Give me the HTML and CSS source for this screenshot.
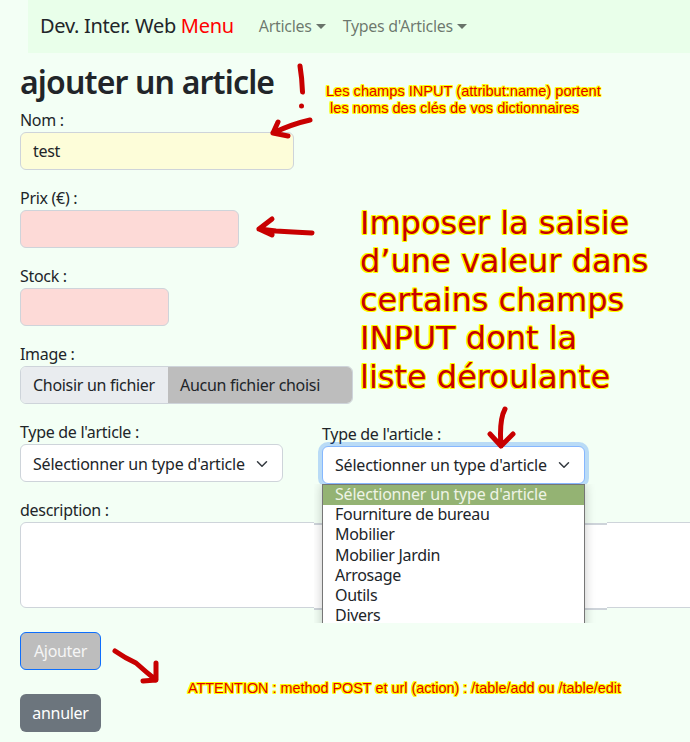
FILE: index.html
```html
<!DOCTYPE html>
<html lang="fr">
<head>
<meta charset="utf-8">
<title>ajouter un article</title>
<link rel="stylesheet" href="styles.css">
</head>
<body>
<div class="page">
  <nav class="navbar">
    <a class="brand">Dev. Inter. Web <span class="brand-red">Menu</span></a>
    <a class="nav-link">Articles<i class="caret"></i></a>
    <a class="nav-link">Types d'Articles<i class="caret"></i></a>
  </nav>
  <main class="content">
    <h1 class="title">ajouter un article</h1>
    <div class="field">
      <label class="lbl">Nom :</label>
      <input class="ctl ctl-name" type="text" value="test">
    </div>
    <div class="field">
      <label class="lbl">Prix (€) :</label>
      <input class="ctl ctl-price" type="text">
    </div>
    <div class="field">
      <label class="lbl">Stock :</label>
      <input class="ctl ctl-stock" type="text">
    </div>
    <div class="field">
      <label class="lbl">Image :</label>
      <div class="file"><span class="file-btn">Choisir un fichier</span><span class="file-name">Aucun fichier choisi</span></div>
    </div>
    <div class="type-row">
      <div class="type-col">
        <label class="lbl">Type de l'article :</label>
        <div class="sel">Sélectionner un type d'article<svg class="chev" viewBox="0 0 16 16"><path d="M2 5l6 6 6-6" fill="none" stroke="#343a40" stroke-width="2" stroke-linecap="round" stroke-linejoin="round"/></svg></div>
      </div>
      <div class="type-col type-col-open">
        <label class="lbl">Type de l'article :</label>
        <div class="sel sel-focus">Sélectionner un type d'article<svg class="chev" viewBox="0 0 16 16"><path d="M2 5l6 6 6-6" fill="none" stroke="#343a40" stroke-width="2" stroke-linecap="round" stroke-linejoin="round"/></svg></div>
        <div class="patch">
          <div class="patch-band"></div>
          <ul class="list">
            <li class="opt opt-active">Sélectionner un type d'article</li>
            <li class="opt">Fourniture de bureau</li>
            <li class="opt">Mobilier</li>
            <li class="opt">Mobilier Jardin</li>
            <li class="opt">Arrosage</li>
            <li class="opt">Outils</li>
            <li class="opt">Divers</li>
          </ul>
        </div>
      </div>
    </div>
    <div class="field field-desc">
      <label class="lbl">description :</label>
      <textarea class="ctl ctl-desc"></textarea>
    </div>
    <button class="btn btn-add" type="button">Ajouter</button>
    <button class="btn btn-cancel" type="button">annuler</button>
  </main>

  <svg class="ink" viewBox="0 0 690 742" width="690" height="742">
    <g fill="none" stroke="#c80000" stroke-linecap="round" stroke-linejoin="round">
      <path stroke-width="5" d="M300 66 Q302 78 302.500 92"/>
      <path stroke-width="5" d="M310 120 Q292 124 273 133 M278 122 L273 133 L288 136"/>
      <path stroke-width="5" d="M312 233 Q292 232 276 231 L259 229 M272 219 L259 229 L272 235"/>
      <path stroke-width="5" d="M505 409 Q499 420 501 446 M490 434 L501 446 L513 434"/>
      <path stroke-width="5" d="M115 651 Q125 658 136 663 Q146 672 156 680 M156 663 L156 680 L143 681"/>
    </g>
    <circle cx="301.500" cy="106" r="2.500" fill="#c80000"/>
  </svg>
  <p class="note note-top">Les champs INPUT (attribut:name) portent<br>&nbsp;les noms des clés de vos dictionnaires</p>
  <p class="note-big">Imposer la saisie<br>d’une valeur dans<br>certains champs<br>INPUT dont la<br>liste déroulante</p>
  <p class="note note-bottom">ATTENTION : method POST et url (action) : /table/add ou /table/edit</p>
</div>
</body>
</html>
```
FILE: styles.css
```css
* { box-sizing: border-box; }
html, body { margin: 0; padding: 0; }
body {
  background: #f3fff5;
  color: #212529;
  font-family: "Noto Sans", "Open Sans", sans-serif;
  font-size: 16px;
  letter-spacing: -0.3px;
}
.page {
  position: relative;
  width: 690px;
  height: 742px;
  overflow: hidden;
}
.navbar {
  display: flex;
  align-items: center;
  height: 53px;
  margin-left: 28px;
  padding: 0 0 2px 12px;
  background: #e9ffea;
}
.brand { font-size: 20px; margin-right: 25px; white-space: nowrap; }
.brand-red { color: #ff0000; }
.nav-link { color: rgba(0,0,0,.55); margin-right: 17px; white-space: nowrap; }
.caret {
  display: inline-block;
  margin-left: 4px;
  vertical-align: 3px;
  border-top: 5px solid rgba(0,0,0,.55);
  border-left: 5px solid transparent;
  border-right: 5px solid transparent;
}
.content { padding: 10px 20px 0; }
.title {
  margin: 0 0 7px;
  font-size: 32px;
  font-weight: 600;
  letter-spacing: -0.85px;
  line-height: 38px;
}
.field { margin-bottom: 16px; }
.field-desc { margin-bottom: 24px; }
.lbl { display: block; height: 24px; line-height: 24px; }
.ctl {
  display: block;
  height: 38px;
  padding: 6px 12px;
  border: 1px solid #ced4da;
  border-radius: 6px;
  font: inherit;
  letter-spacing: inherit;
  color: #212529;
  outline: none;
}
.ctl-name { width: 274px; background: #fdfdd9; }
.ctl-price { width: 219px; background: #fddad7; }
.ctl-stock { width: 149px; background: #fddad7; }
.ctl-desc { width: 690px; height: 86px; background: #fff; resize: none; }
.file {
  display: flex;
  width: 333px;
  height: 38px;
  border: 1px solid #ced4da;
  border-radius: 6px;
  overflow: hidden;
  line-height: 36px;
}
.file-btn { width: 147px; padding-left: 12px; background: #e9ecef; white-space: nowrap; }
.file-name { flex: 1; padding-left: 12px; background: #bdbdbd; white-space: nowrap; }
.type-row { display: flex; gap: 39px; margin-bottom: 14px; }
.type-col { width: 263px; }
.type-col-open { position: relative; margin-top: 2px; }
.sel {
  display: flex;
  align-items: center;
  justify-content: space-between;
  height: 38px;
  padding: 1px 12px 0;
  background: #fff;
  border: 1px solid #ced4da;
  border-radius: 6px;
  letter-spacing: -0.2px;
  white-space: nowrap;
}
.sel-focus {
  position: relative;
  z-index: 2;
  padding-top: 0;
  border-color: #86b7fe;
  box-shadow: 0 0 0 4px rgba(13,110,253,.25);
}
.chev { width: 12px; height: 12px; margin-right: 2px; flex: none; }
.patch {
  position: absolute;
  z-index: 3;
  top: 62px;
  left: -8px;
  width: 293px;
  height: 139px;
  overflow: hidden;
  background: #f3fff5;
}
.patch-band {
  position: absolute;
  top: 39px;
  left: 0;
  width: 293px;
  height: 87px;
  background: #fff;
  border-top: 2px solid #ced4da;
  border-bottom: 2px solid #ced4da;
}
.list {
  position: absolute;
  top: 0;
  left: 8px;
  width: 263px;
  height: 160px;
  margin: 0;
  padding: 0;
  list-style: none;
  background: #fff;
  border: 1px solid #767676;
  box-shadow: 0 0 10px rgba(0,0,0,.22);
}
.opt { height: 20.200px; padding-left: 12px; line-height: 18px; white-space: nowrap; }
.opt-active { background: #94b373; color: #eef3e6; letter-spacing: -0.2px; }
.btn {
  display: block;
  height: 38px;
  width: 81px;
  margin-bottom: 24px;
  padding: 0;
  border: 1px solid transparent;
  border-radius: 6px;
  font: inherit;
  letter-spacing: inherit;
}
.btn-add { background: #bdbdbd; border-color: #0d6efd; color: #f5f5f5; }
.btn-cancel { background: #6c757d; color: #fff; }
.ink { position: absolute; top: 0; left: 0; z-index: 4; pointer-events: none; }
.note, .note-big {
  position: absolute;
  z-index: 5;
  margin: 0;
  white-space: nowrap;
  letter-spacing: 0;
}
.note {
  font-family: "Liberation Sans", sans-serif;
  font-size: 14.600px;
  line-height: 17px;
  color: #e00000;
  text-shadow: 1px 0 #ffff00, -1px 0 #ffff00, 0 1px #ffff00, 0 -1px #ffff00,
    1px 1px #ffff00, -1px -1px #ffff00, 1px -1px #ffff00, -1px 1px #ffff00;
}
.note-top { left: 326px; top: 83px; }
.note-bottom { left: 188px; top: 680px; font-size: 14.400px; }
.note-big {
  left: 360px;
  top: 204px;
  font-family: "DejaVu Sans", sans-serif;
  font-size: 32px;
  line-height: 38.400px;
  color: #c80000;
  text-shadow: 1px 0 #ffff00, -1px 0 #ffff00, 0 1px #ffff00, 0 -1px #ffff00,
    1px 1px #ffff00, -1px -1px #ffff00, 1px -1px #ffff00, -1px 1px #ffff00;
}
```
